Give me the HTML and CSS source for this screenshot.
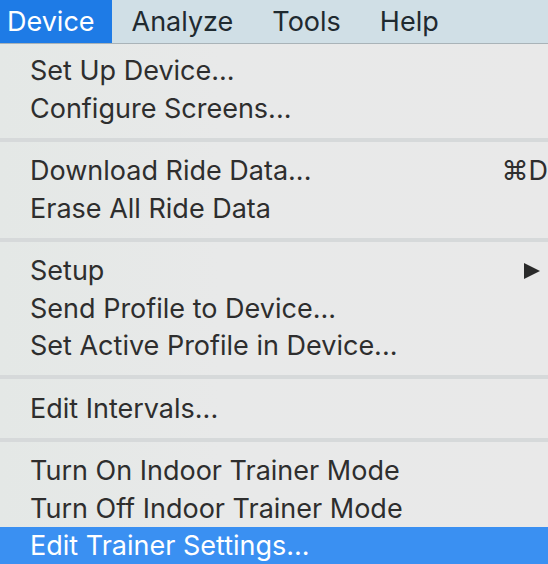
FILE: index.html
```html
<!DOCTYPE html>
<html>
<head>
<meta charset="utf-8">
<link rel="stylesheet" href="styles.css">
</head>
<body>
<div class="menubar">
  <div class="title active">Device</div>
  <div class="title">Analyze</div>
  <div class="title">Tools</div>
  <div class="title">Help</div>
</div>
<div class="menu">
  <div class="item">Set Up Device...</div>
  <div class="item">Configure Screens...</div>
  <div class="sep"></div>
  <div class="item"><span>Download Ride Data...</span><span class="key">⌘D</span></div>
  <div class="item">Erase All Ride Data</div>
  <div class="sep"></div>
  <div class="item"><span>Setup</span><svg class="arrow" width="18" height="18" viewBox="0 0 18 18"><polygon points="1,1 17,9 1,17" fill="#2a2a2a"/></svg></div>
  <div class="item">Send Profile to Device...</div>
  <div class="item">Set Active Profile in Device...</div>
  <div class="sep"></div>
  <div class="item">Edit Intervals...</div>
  <div class="sep"></div>
  <div class="item">Turn On Indoor Trainer Mode</div>
  <div class="item">Turn Off Indoor Trainer Mode</div>
  <div class="item selected">Edit Trainer Settings...</div>
</div>
</body>
</html>
```
FILE: styles.css
```css
html, body {
  margin: 0;
  padding: 0;
  width: 548px;
  height: 564px;
  overflow: hidden;
  font-family: Inter, "Noto Sans", sans-serif;
}
body {
  background: linear-gradient(90deg, #e4e8e6 0%, #e8e9e9 40%, #e9e9e9 100%);
}
.menubar {
  display: flex;
  height: 43px;
  background: #d0dfe6;
  border-bottom: 1px solid #a9b3b8;
  box-sizing: content-box;
}
.title {
  height: 43px;
  line-height: 43px;
  font-size: 27px;
  color: #1f2a30;
  padding: 0 19.5px;
  white-space: nowrap;
}
.title.active {
  background: #1e7be6;
  color: #fff;
  padding: 0 0 0 7px;
  width: 112px;
  box-sizing: border-box;
}
.menu {
  padding-top: 8px;
}
.item {
  height: 37.5px;
  line-height: 37.5px;
  font-size: 27px;
  color: #2e2e2e;
  padding-left: 30px;
  display: flex;
  align-items: center;
  justify-content: space-between;
  white-space: nowrap;
}
.item.selected {
  background: #3a90f2;
  color: #fff;
}
.key {
  margin-right: 0px;
}
.arrow {
  margin-right: 7px;
}
.sep {
  height: 25px;
  display: flex;
  align-items: center;
}
.sep::before {
  content: "";
  display: block;
  width: 100%;
  height: 4px;
  background: #d6d9da;
}
```
